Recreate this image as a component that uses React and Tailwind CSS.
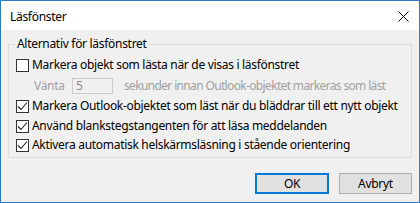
import React from "react";

const font = { fontFamily: '"Noto Sans", "Segoe UI", sans-serif' };

function Check({ checked }) {
  return (
    <div className="w-[13px] h-[13px] border border-[#333333] bg-white flex items-center justify-center shrink-0">
      {checked && (
        <svg width="11" height="11" viewBox="0 0 11 11">
          <path d="M1 5.5 L4 8.5 L10 1.5" fill="none" stroke="#202020" strokeWidth="1.1" />
        </svg>
      )}
    </div>
  );
}

function Row({ checked, children, cls }) {
  return (
    <div className={"flex items-center h-[18px] " + cls}>
      <Check checked={checked} />
      <span className="ml-[3px] text-black whitespace-nowrap">{children}</span>
    </div>
  );
}

export default function App() {
  return (
    <div
      className="w-[420px] h-[203px] border border-[#2b79c8] bg-[#f0f0f0] flex flex-col text-[12px] leading-[16px] tracking-[-0.3px] select-none"
      style={font}
    >
      <div className="h-[29px] bg-white flex items-center justify-between pl-[9px] pr-[10px] pt-[2px] shrink-0">
        <span className="text-black text-[12px]">Läsfönster</span>
        <svg width="11" height="11" viewBox="0 0 11 11">
          <path d="M0.5 0.5 L10.5 10.5 M10.5 0.5 L0.5 10.5" stroke="#000" strokeWidth="1" />
        </svg>
      </div>
      <div className="flex-1 flex flex-col px-[7px]">
        <fieldset className="mt-[6px] border border-[#dcdcdc] pl-[7px] pt-[4px] pb-[3px] flex flex-col">
          <legend className="ml-[-1px] px-[2px] text-black leading-[16px]">Alternativ för läsfönstret</legend>
          <Row checked={false} cls="">Markera objekt som lästa när de visas i läsfönstret</Row>
          <div className="flex items-center h-[16px] mt-[4px] pl-[18px] text-[#a0a0a0]">
            <span className="w-[38px]">Vänta</span>
            <div className="w-[41px] h-[16px] border border-[#cccccc] bg-[#f0f0f0] pl-[3px] text-[#8a8a8a] leading-[14px]">5</div>
            <span className="ml-[11px] whitespace-nowrap tracking-[-0.65px]">sekunder innan Outlook-objektet markeras som läst</span>
          </div>
          <Row checked cls="mt-[3px]">Markera Outlook-objektet som läst när du bläddrar till ett nytt objekt</Row>
          <Row checked cls="mt-[2px]">Använd blankstegstangenten för att läsa meddelanden</Row>
          <Row checked cls="mt-[1px]">Aktivera automatisk helskärmsläsning i stående orientering</Row>
        </fieldset>
        <div className="flex justify-end gap-[10px] mt-[15px]">
          <button className="w-[74px] h-[21px] border-2 border-[#0078d7] bg-[#e1e1e1] text-black text-[12px] leading-none">OK</button>
          <button className="w-[73px] h-[21px] border border-[#adadad] bg-[#e1e1e1] text-black text-[12px] leading-none">Avbryt</button>
        </div>
      </div>
    </div>
  );
}
